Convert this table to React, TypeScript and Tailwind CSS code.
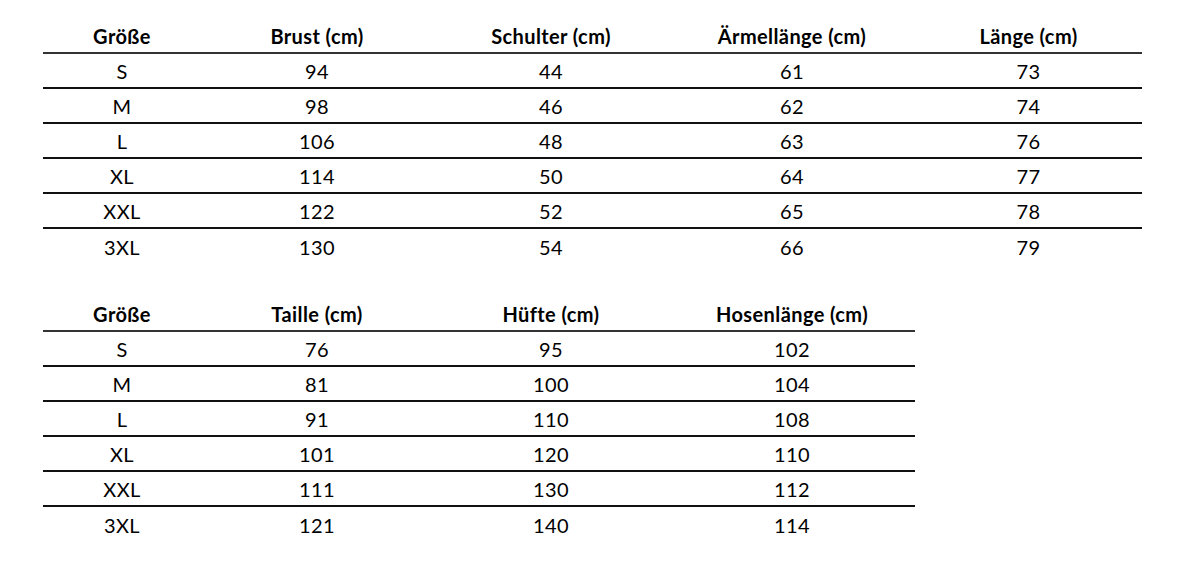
const topHeaders = ["Größe", "Brust (cm)", "Schulter (cm)", "Ärmellänge (cm)", "Länge (cm)"];
const topRows = [
  ["S", "94", "44", "61", "73"],
  ["M", "98", "46", "62", "74"],
  ["L", "106", "48", "63", "76"],
  ["XL", "114", "50", "64", "77"],
  ["XXL", "122", "52", "65", "78"],
  ["3XL", "130", "54", "66", "79"],
];

const bottomHeaders = ["Größe", "Taille (cm)", "Hüfte (cm)", "Hosenlänge (cm)"];
const bottomRows = [
  ["S", "76", "95", "102"],
  ["M", "81", "100", "104"],
  ["L", "91", "110", "108"],
  ["XL", "101", "120", "110"],
  ["XXL", "111", "130", "112"],
  ["3XL", "121", "140", "114"],
];

const widths = ["w-[158px]", "w-[232px]", "w-[236px]", "w-[246px]", "w-[227px]"];

function SizeTable({ headers, rows }: { headers: string[]; rows: string[][] }) {
  return (
    <div className="flex flex-col">
      <div className="flex h-[35px] border-b-2 border-[#333]">
        {headers.map((h, i) => (
          <div key={h} className={`${widths[i]} flex items-center justify-center font-bold`}>
            {h}
          </div>
        ))}
      </div>
      {rows.map((row, r) => (
        <div
          key={row[0]}
          className={`flex h-[35px] ${r < rows.length - 1 ? "border-b-2 border-[#111]" : ""}`}
        >
          {row.map((cell, i) => (
            <div key={i} className={`${widths[i]} flex items-center justify-center`}>
              {cell}
            </div>
          ))}
        </div>
      ))}
    </div>
  );
}

export default function App() {
  return (
    <div
      className="w-[1182px] h-[561px] bg-white text-black text-[20px] tracking-[0.4px] pl-[43px] pt-[19px] flex flex-col items-start gap-[33px]"
      style={{ fontFamily: "Lato, 'Open Sans', sans-serif" }}
    >
      <SizeTable headers={topHeaders} rows={topRows} />
      <SizeTable headers={bottomHeaders} rows={bottomRows} />
    </div>
  );
}
